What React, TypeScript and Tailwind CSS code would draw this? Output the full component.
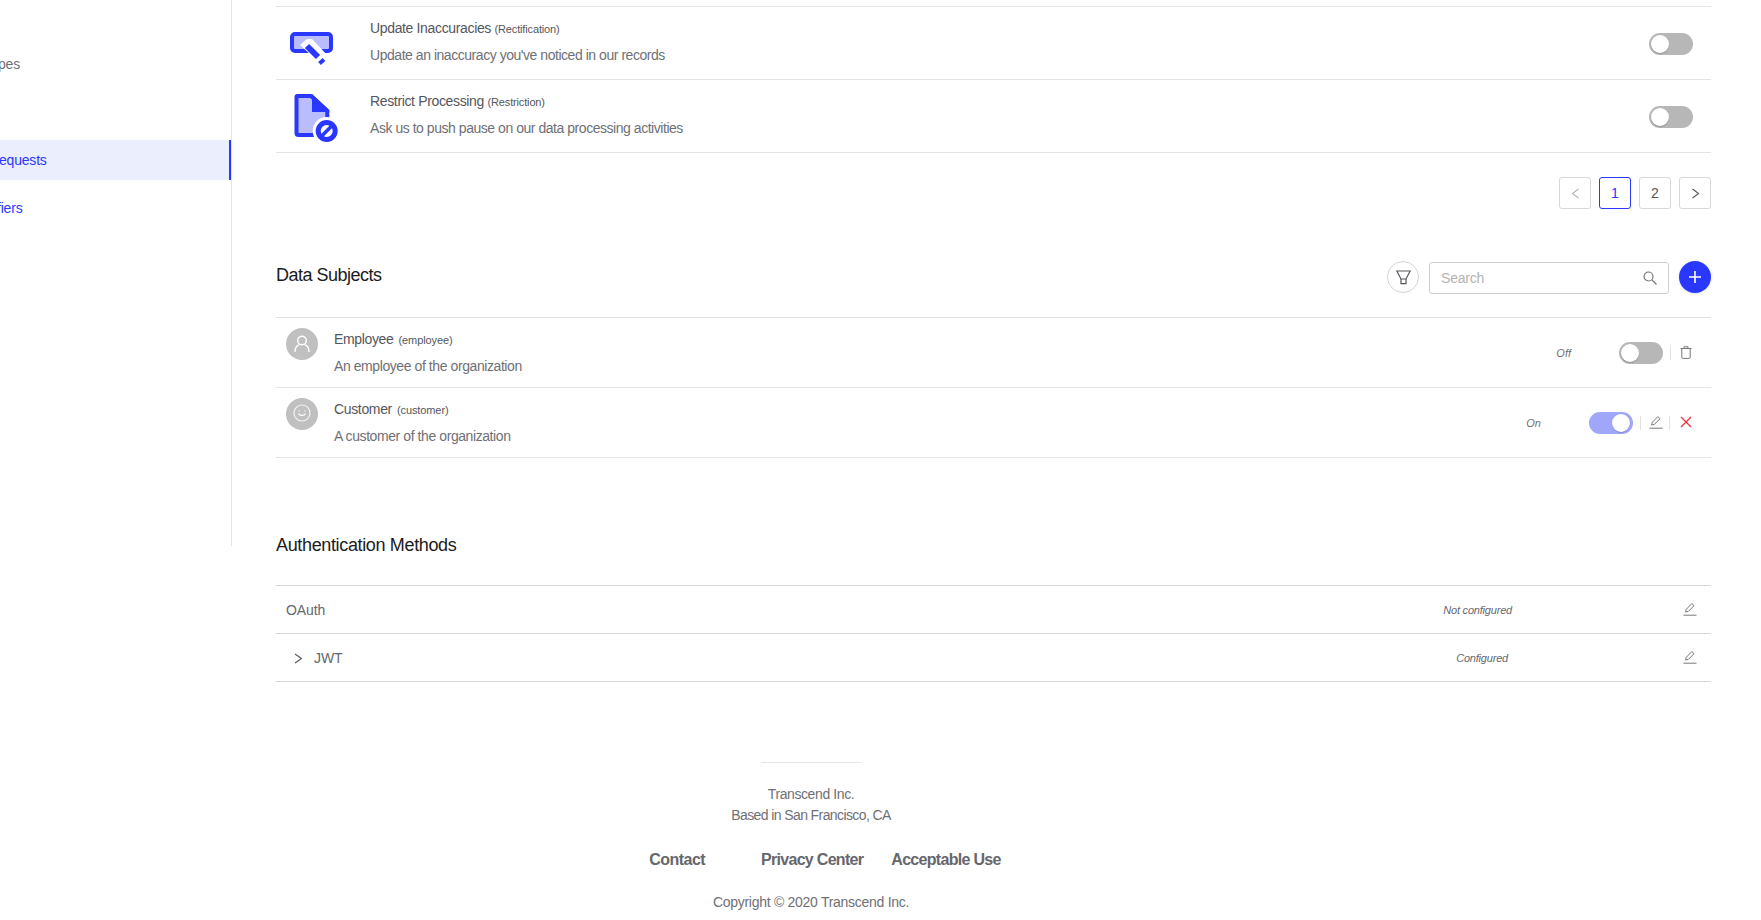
const FONT = "font-['Liberation_Sans',Arial,sans-serif]";

function Toggle({ on = false }: { on?: boolean }) {
  return (
    <div
      className={
        on
          ? "flex h-[22px] w-[44px] shrink-0 items-center justify-end rounded-full bg-[#a0a7fb] p-[3px]"
          : "flex h-[22px] w-[44px] shrink-0 items-center justify-start rounded-full bg-[#b7b7b7] p-[2px]"
      }
    >
      <div className="h-[18px] w-[18px] rounded-full bg-white shadow-[0_1px_1px_rgba(0,0,0,0.2)]" />
    </div>
  );
}

function PencilIcon({ className = "" }: { className?: string }) {
  return (
    <svg className={className} width="14" height="14" viewBox="0 0 14 14" fill="none" stroke="#77787d" strokeWidth="1">
      <path d="M2.5 10L3.3 7.3L8.8 1.6L11 3.7L5.4 9.4L2.5 10Z" strokeLinejoin="round" />
      <path d="M0.5 13.2H13.5" />
    </svg>
  );
}

function TrashIcon() {
  return (
    <svg width="12" height="13" viewBox="0 0 12 13" fill="none" stroke="#77787d" strokeWidth="1">
      <path d="M0.5 2.5H11.5" />
      <path d="M4 2.5V0.8H8V2.5" />
      <path d="M1.8 2.5V11.2C1.8 11.9 2.2 12.4 2.9 12.4H9.1C9.8 12.4 10.2 11.9 10.2 11.2V2.5" />
    </svg>
  );
}

function RectifyIcon() {
  return (
    <svg width="46" height="34" viewBox="0 0 46 34">
      <rect x="2" y="2" width="39" height="17" rx="3" fill="#b9bdfd" stroke="#2a38ff" strokeWidth="4" />
      <path d="M10 13L17 7H22L38 24L31 32L10 13Z" fill="#ffffff" />
      <path d="M17 14L28 25" stroke="#2a38ff" strokeWidth="6" />
      <path d="M29.5 31.5L34 27.5" stroke="#2a38ff" strokeWidth="4" />
    </svg>
  );
}

function RestrictIcon() {
  return (
    <svg width="50" height="54" viewBox="0 0 50 54">
      <path d="M5 4H19L35.3 19V43H6.5C5 43 4.5 42 4.5 41V4.5Z" fill="#b9bdfd" stroke="#2a38ff" strokeWidth="4" strokeLinejoin="round" />
      <path d="M20 2L37.3 18V20H20Z" fill="#2a38ff" />
      <circle cx="34.7" cy="39" r="14" fill="#ffffff" />
      <circle cx="34.7" cy="39" r="8.5" fill="#ffffff" stroke="#2a38ff" strokeWidth="5" />
      <path d="M29 44.7L40.4 33.3" stroke="#2a38ff" strokeWidth="3.5" />
    </svg>
  );
}

function PersonGlyph() {
  return (
    <svg width="16" height="18" viewBox="0 0 16 18" fill="none" stroke="#ffffff" strokeWidth="1.4">
      <circle cx="8" cy="5.5" r="4.3" />
      <path d="M1 17C1 12.5 3.5 10.3 5.5 9.7M15 17C15 12.5 12.5 10.3 10.5 9.7" />
    </svg>
  );
}

function SmileGlyph() {
  return (
    <svg className="-translate-y-[1px]" width="18" height="18" viewBox="0 0 18 18" fill="none" stroke="#ffffff" strokeWidth="1.2">
      <circle cx="9" cy="9" r="8" opacity="0.8" />
      <path d="M5.5 9.5C6.5 12 11.5 12 12.5 9.5" />
      <path d="M6 6.5V7.5M12 6.5V7.5" />
    </svg>
  );
}

function RightRow({
  icon,
  iconClass,
  title,
  legal,
  desc,
}: {
  icon: React.ReactNode;
  iconClass: string;
  title: string;
  legal: string;
  desc: string;
}) {
  return (
    <div className="flex h-[73px] items-center border-b border-[#e5e5e7]">
      <div className={`flex w-[94px] shrink-0 justify-start ${iconClass}`}>{icon}</div>
      <div className="flex-1 pb-[4px]">
        <div className="text-[14px] leading-[20px] tracking-[-0.35px] text-[#55565c]">
          {title} <span className="text-[11px] tracking-[-0.15px]">({legal})</span>
        </div>
        <div className="mt-[6px] text-[14px] leading-[20px] tracking-[-0.46px] text-[#6f7076]">{desc}</div>
      </div>
      <div className="mr-[18px] pt-[2px]">
        <Toggle />
      </div>
    </div>
  );
}

function SubjectRow({
  icon,
  title,
  code,
  desc,
  status,
  on,
}: {
  icon: React.ReactNode;
  title: string;
  code: string;
  desc: string;
  status: string;
  on: boolean;
}) {
  return (
    <div className="flex h-[70px] items-start border-b border-[#e5e5e7] pt-[10px]">
      <div className="ml-[10px] flex h-[32px] w-[32px] shrink-0 items-center justify-center rounded-full bg-[#c0c0c0]">
        {icon}
      </div>
      <div className="ml-[16px] flex-1 pt-px">
        <div className="text-[14px] leading-[20px] tracking-[-0.35px] text-[#55565c]">
          {title} <span className="ml-[1.5px] text-[11px] tracking-[-0.1px]">({code})</span>
        </div>
        <div className="mt-[6px] text-[14px] leading-[20px] tracking-[-0.42px] text-[#6f7076]">{desc}</div>
      </div>
      <div className="mt-[14px] flex h-[22px] items-center pr-[19px]">
        <span className="mr-[48px] text-[11px] italic text-[#6f7076]">{status}</span>
        <Toggle on={on} />
        {on ? (
          <>
            <div className="ml-[7px] h-[14px] w-px bg-[#e2e2e2]" />
            <PencilIcon className="ml-[8px] -translate-y-px" />
            <div className="ml-[6px] h-[14px] w-px bg-[#e2e2e2]" />
            <svg className="ml-[10px] -translate-y-px" width="12" height="12" viewBox="0 0 12 12" stroke="#f4303a" strokeWidth="1.3">
              <path d="M1 1L11 11M11 1L1 11" />
            </svg>
          </>
        ) : (
          <>
            <div className="ml-[7px] h-[14px] w-px bg-[#e2e2e2]" />
            <div className="ml-[9px] -translate-y-[1px]">
              <TrashIcon />
            </div>
          </>
        )}
      </div>
    </div>
  );
}

function PageButton({ children, active, muted }: { children: React.ReactNode; active?: boolean; muted?: boolean }) {
  return (
    <div
      className={
        active
          ? "flex h-[32px] w-[32px] items-center justify-center rounded-[3px] border border-[#2a38ff] text-[14px] text-[#2a38ff]"
          : muted
            ? "flex h-[32px] w-[32px] items-center justify-center rounded-[3px] border border-[#d8d8d8] text-[14px] text-[#a5a5a5]"
            : "flex h-[32px] w-[32px] items-center justify-center rounded-[3px] border border-[#d8d8d8] text-[14px] text-[#55565c]"
      }
    >
      {children}
    </div>
  );
}

export default function App() {
  return (
    <div className={`${FONT} flex h-[920px] w-full overflow-hidden bg-white`}>
      <aside className="h-[546px] w-[232px] shrink-0 overflow-hidden border-r border-[#e5e5e7] text-[14px] tracking-[-0.2px]">
        <div className="mt-[44px] flex h-[40px] items-center text-[#6f7076]">
          <span className="-ml-[2px]">pes</span>
        </div>
        <div className="mt-[56px] flex h-[40px] items-center border-r-2 border-[#2a38ff] bg-[#ebeefd] text-[#2a38ff]">
          <span className="-ml-[1px]">equests</span>
        </div>
        <div className="mt-[8px] flex h-[40px] items-center text-[#2a38ff]">
          <span className="-ml-[3px]">fiers</span>
        </div>
      </aside>

      <main className="min-w-0 flex-1 pl-[44px] pr-[50px] pt-[6px]">
        <div className="border-t border-[#e5e5e7]">
          <RightRow
            icon={<RectifyIcon />}
            iconClass="pl-[14px] pt-[11px]"
            title="Update Inaccuracies"
            legal="Rectification"
            desc="Update an inaccuracy you've noticed in our records"
          />
          <RightRow
            icon={<RestrictIcon />}
            iconClass="pl-[16px] pt-[6px]"
            title="Restrict Processing"
            legal="Restriction"
            desc="Ask us to push pause on our data processing activities"
          />
        </div>

        <div className="mt-[24px] flex justify-end gap-[8px]">
          <PageButton muted>
            <svg width="9" height="11" viewBox="0 0 9 11" fill="none" stroke="#b5b5b5" strokeWidth="1.1">
              <path d="M7.5 1L1.5 5.5L7.5 10" />
            </svg>
          </PageButton>
          <PageButton active>1</PageButton>
          <PageButton>2</PageButton>
          <PageButton>
            <svg width="9" height="11" viewBox="0 0 9 11" fill="none" stroke="#55565c" strokeWidth="1.1">
              <path d="M1.5 1L7.5 5.5L1.5 10" />
            </svg>
          </PageButton>
        </div>

        <div className="mt-[52px] flex h-[32px] items-center">
          <h2 className="flex-1 -translate-y-[2px] text-[18px] tracking-[-0.5px] text-[#1b1b20]">Data Subjects</h2>
          <div className="flex h-[32px] w-[32px] items-center justify-center rounded-full border border-[#d4d4d4]">
            <svg width="15" height="15" viewBox="0 0 15 15" fill="none" stroke="#55565c" strokeWidth="1.2">
              <path d="M0.8 1H14.2L10 9H5L0.8 1Z" />
              <path d="M5 9V13.6H10V9" />
            </svg>
          </div>
          <div className="ml-[10px] mt-[2px] flex h-[32px] w-[240px] items-center justify-between rounded-[3px] border border-[#cfcfcf] pl-[11px] pr-[11px] text-[14px] text-[#b3b3b3]">
            <span className="tracking-[-0.2px]">Search</span>
            <svg width="14" height="14" viewBox="0 0 14 14" fill="none" stroke="#77787d" strokeWidth="1.2">
              <circle cx="5.5" cy="5.5" r="4.5" />
              <path d="M9 9L13.5 13.5" />
            </svg>
          </div>
          <div className="ml-[10px] flex h-[32px] w-[32px] items-center justify-center rounded-full bg-[#2a38ff] shadow-[0_1px_3px_rgba(0,0,0,0.12)]">
            <svg width="12" height="12" viewBox="0 0 12 12" stroke="#ffffff" strokeWidth="1.6">
              <path d="M6 0V12M0 6H12" />
            </svg>
          </div>
        </div>

        <div className="mt-[24px] border-t border-[#e0e0e2]">
          <SubjectRow
            icon={<PersonGlyph />}
            title="Employee"
            code="employee"
            desc="An employee of the organization"
            status="Off"
            on={false}
          />
          <SubjectRow
            icon={<SmileGlyph />}
            title="Customer"
            code="customer"
            desc="A customer of the organization"
            status="On"
            on
          />
        </div>

        <h2 className="mt-[75px] text-[18px] leading-[24px] tracking-[-0.35px] text-[#1b1b20]">Authentication Methods</h2>

        <div className="mt-[28px] border-t border-[#d4d4d6] text-[14px] text-[#66676d]">
          <div className="flex h-[48px] items-center border-b border-[#d4d4d6] pl-[10px] pr-[14px] pt-[2px]">
            <span className="flex-1 tracking-[-0.1px]">OAuth</span>
            <span className="mr-[171px] text-[11px] italic tracking-[-0.2px]">Not configured</span>
            <PencilIcon className="-translate-y-[2px]" />
          </div>
          <div className="flex h-[48px] items-center border-b border-[#d4d4d6] pl-[18px] pr-[14px] pt-[2px]">
            <svg width="9" height="11" viewBox="0 0 9 11" fill="none" stroke="#55565c" strokeWidth="1.1">
              <path d="M1 1L7.5 5.5L1 10" />
            </svg>
            <span className="ml-[11px] flex-1 tracking-[-0.1px]">JWT</span>
            <span className="mr-[175px] text-[11px] italic tracking-[-0.2px]">Configured</span>
            <PencilIcon className="-translate-y-[2px]" />
          </div>
        </div>

        <footer className="mt-[80px] w-[1070px] text-center text-[14px] text-[#6f7076]">
          <div className="mx-auto w-[100px] border-t border-[#e5e5e7]" />
          <div className="mt-[21px] leading-[21px] tracking-[-0.4px]">Transcend Inc.</div>
          <div className="leading-[21px] tracking-[-0.6px]">Based in San Francisco, CA</div>
          <div className="mt-[23px] flex justify-center pl-[28px] text-[16px] font-bold leading-[22px] tracking-[-0.7px] text-[#66676d]">
            <span className="mr-[56px] tracking-[-0.55px]">Contact</span>
            <span className="mr-[28px]">Privacy Center</span>
            <span>Acceptable Use</span>
          </div>
          <div className="mt-[21px] leading-[20px] tracking-[-0.28px]">Copyright © 2020 Transcend Inc.</div>
        </footer>
      </main>
    </div>
  );
}
